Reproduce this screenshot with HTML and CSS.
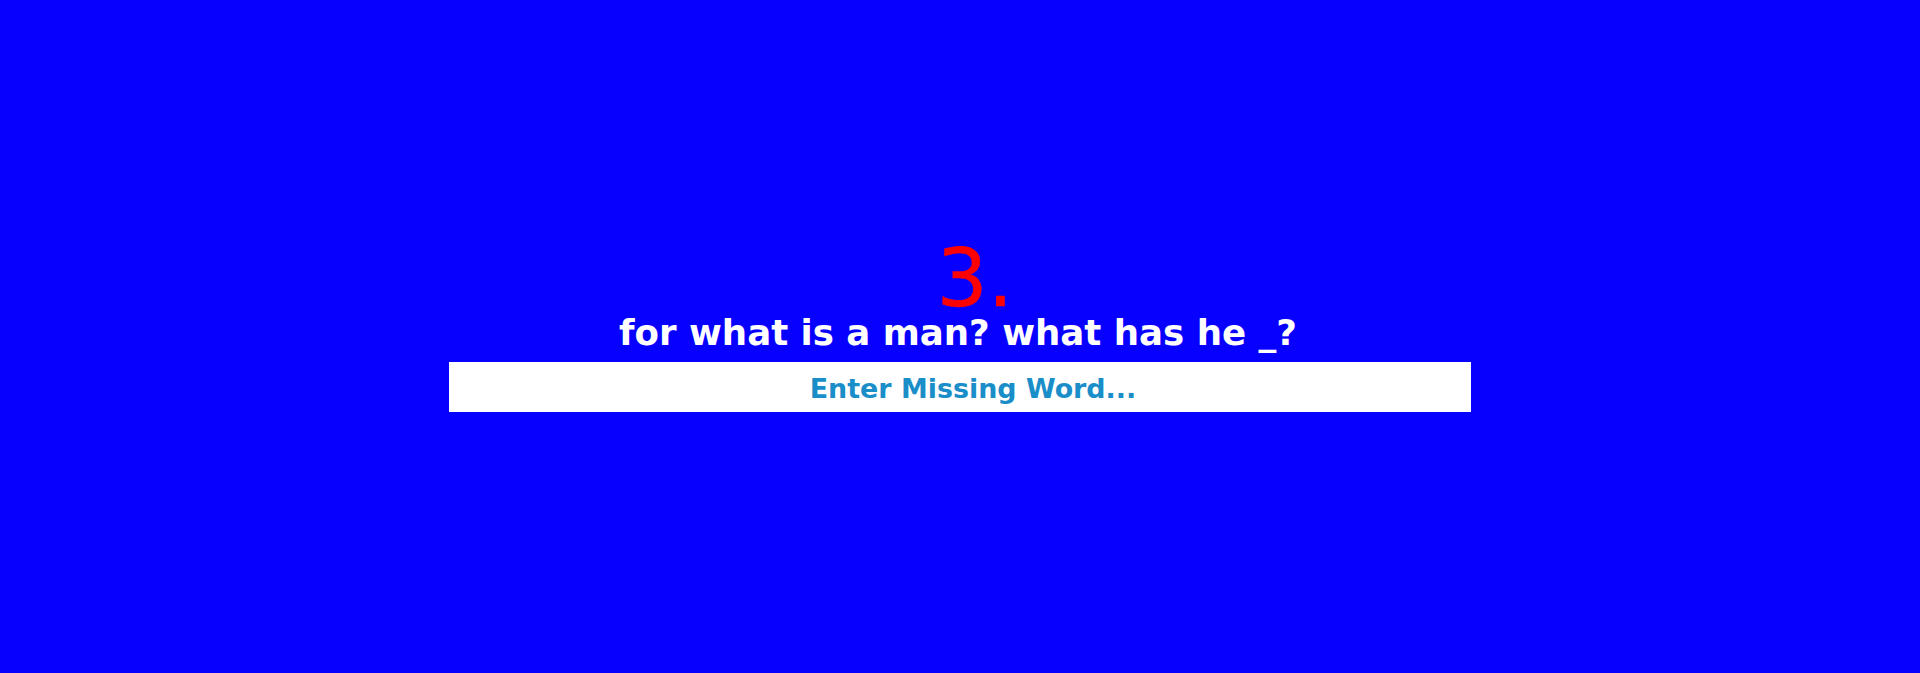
FILE: index.html
```html
<!DOCTYPE html>
<html lang="en">
<head>
<meta charset="utf-8">
<title>Quiz</title>
<link rel="stylesheet" href="styles.css">
</head>
<body>
<main class="quiz">
  <div class="num">3.</div>
  <div class="question">for what is a man? what has he _?</div>
  <input class="answer" type="text" placeholder="Enter Missing Word...">
</main>
</body>
</html>
```

FILE: styles.css
```css
html, body {
  margin: 0;
  padding: 0;
}
body {
  background: #0800ff;
  height: 673px;
  overflow: hidden;
}
.quiz {
  display: flex;
  flex-direction: column;
  align-items: center;
  padding-top: 239px;
}
.num {
  font-family: "DejaVu Sans", "Liberation Sans", sans-serif;
  font-size: 80px;
  line-height: 80px;
  color: #ff0000;
  padding-left: 30px;
  -webkit-text-stroke: 0.6px #ff0000;
}
.question {
  font-family: "DejaVu Sans", "Liberation Sans", sans-serif;
  font-weight: 700;
  font-size: 35.6px;
  line-height: 40px;
  margin-top: -6px;
  padding-right: 4px;
  color: #ffffff;
}
.answer {
  box-sizing: border-box;
  width: 1022px;
  height: 50px;
  margin-top: 9px;
  border: none;
  outline: none;
  background: #ffffff;
  padding: 2px 0 0 26px;
  text-align: center;
  font-family: "DejaVu Sans", "Liberation Sans", sans-serif;
  font-weight: 700;
  font-size: 26.9px;
  color: #1a8ec8;
}
.answer::placeholder {
  color: #1a8ec8;
  opacity: 1;
}
```
